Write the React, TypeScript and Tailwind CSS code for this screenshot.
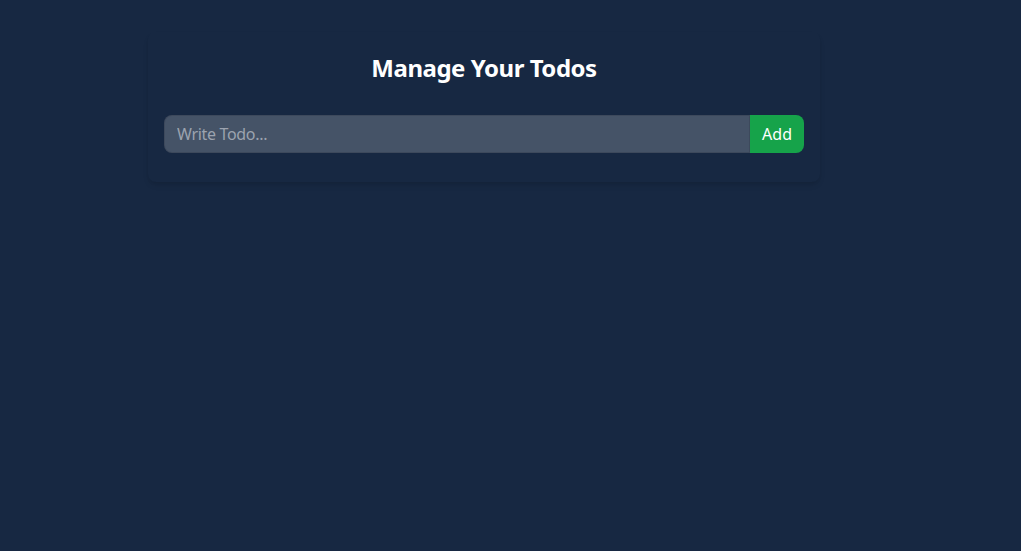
export default function App() {
  return (
    <div className="bg-[#172842] min-h-screen py-8" style={{ fontFamily: '"Noto Sans", "Open Sans", sans-serif' }}>
      <div className="w-full max-w-2xl ml-[148px] shadow-md rounded-lg px-4 pt-3 pb-[13px] text-white">
        <h1 className="text-2xl font-bold text-center mb-[31px] mt-2 tracking-[-0.02em]">Manage Your Todos</h1>
        <div className="mb-4">
          <form className="flex" onSubmit={(e) => e.preventDefault()}>
            <input
              type="text"
              placeholder="Write Todo..."
              className="w-full border border-black/10 rounded-l-lg px-3 outline-none duration-150 bg-white/20 py-1.5 tracking-[-0.02em] placeholder:text-[#9ca3af]"
            />
            <button type="submit" className="rounded-r-lg px-3 py-1 bg-[#16a34a] text-white shrink-0">
              Add
            </button>
          </form>
        </div>
        <div className="flex flex-wrap gap-y-3"></div>
      </div>
    </div>
  );
}
